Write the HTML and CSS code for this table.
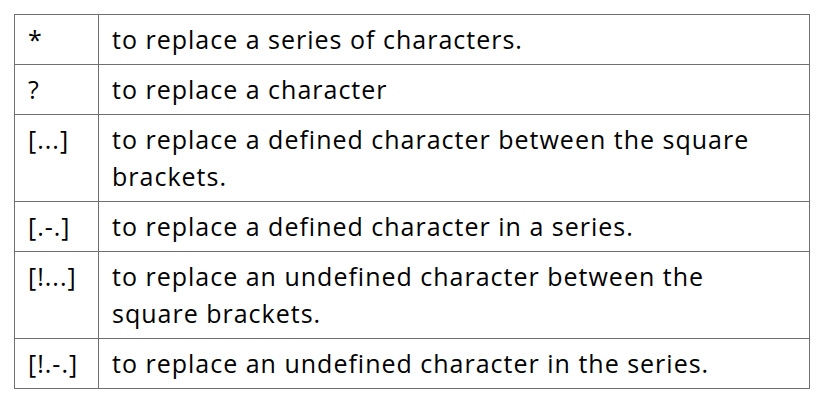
FILE: index.html
```html
<!DOCTYPE html>
<html>
<head>
<meta charset="utf-8">
<link rel="stylesheet" href="styles.css">
</head>
<body>
<table class="wild">
  <tr><td class="sym">*</td><td class="desc">to replace a series of characters.</td></tr>
  <tr><td class="sym">?</td><td class="desc">to replace a character</td></tr>
  <tr><td class="sym">[...]</td><td class="desc">to replace a defined character between the square brackets.</td></tr>
  <tr><td class="sym">[.-.]</td><td class="desc">to replace a defined character in a series.</td></tr>
  <tr><td class="sym">[!...]</td><td class="desc">to replace an undefined character between the square brackets.</td></tr>
  <tr><td class="sym">[!.-.]</td><td class="desc">to replace an undefined character in the series.</td></tr>
</table>
</body>
</html>
```
FILE: styles.css
```css
html, body {
  margin: 0;
  padding: 0;
  background: #ffffff;
}
body {
  padding: 14px 0 0 14px;
  font-family: "Open Sans", "Noto Sans", sans-serif;
  color: #000;
  font-variant-ligatures: none;
}
.wild {
  border-collapse: collapse;
  width: 796px;
  table-layout: fixed;
}
.wild td {
  border: 1px solid #707070;
  font-size: 25px;
  letter-spacing: 1px;
  line-height: 37px;
  padding: 6px 22px 6px 13px;
  vertical-align: top;
  text-align: left;
}
.wild td.sym {
  width: 48px;
}
```
